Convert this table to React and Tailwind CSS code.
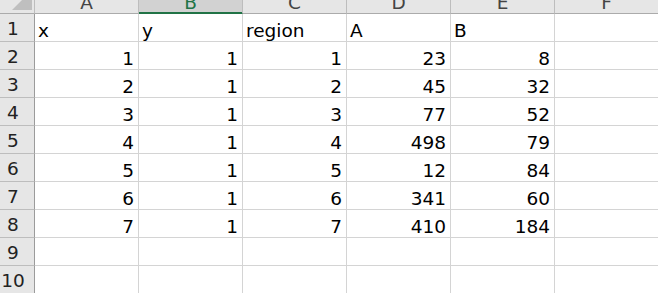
const cols = ['A', 'B', 'C', 'D', 'E', 'F'];

const rows = [
  ['x', 'y', 'region', 'A', 'B', ''],
  [1, 1, 1, 23, 8, ''],
  [2, 1, 2, 45, 32, ''],
  [3, 1, 3, 77, 52, ''],
  [4, 1, 4, 498, 79, ''],
  [5, 1, 5, 12, 84, ''],
  [6, 1, 6, 341, 60, ''],
  [7, 1, 7, 410, 184, ''],
  [],
  [],
];

function Corner() {
  return (
    <div className="relative h-[28px] bg-[#e6e6e6] border-r border-b border-r-[#bdbdbd] border-b-[#ababab]">
      <svg className="absolute left-[12px] top-[4px]" width="20" height="20" viewBox="0 0 20 20">
        <polygon points="20,0 20,20 0,20" fill="#bfbfbf" />
      </svg>
    </div>
  );
}

function ColHead({ label }) {
  const selected = label === 'B';
  return (
    <div
      className={
        selected
          ? 'h-[28px] flex items-end justify-center leading-[20px] bg-[#d2d2d2] text-[#217346] border-r border-b border-r-[#bdbdbd] border-b-[#217346] shadow-[inset_0_-1px_0_#217346]'
          : 'h-[28px] flex items-end justify-center leading-[20px] bg-[#e6e6e6] text-[#444] border-r border-b border-r-[#bdbdbd] border-b-[#ababab]'
      }
    >
      {label}
    </div>
  );
}

export default function App() {
  return (
    <div className="w-[658px] h-[293px] overflow-hidden bg-white text-[18.5px] text-black" style={{ fontFamily: '"DejaVu Sans", sans-serif' }}>
      <div className="-mt-[14px] grid grid-cols-[35px_repeat(6,104px)] w-[659px]">
        <Corner />
        {cols.map((c) => (
          <ColHead key={c} label={c} />
        ))}
        {rows.map((r, i) => (
          <Row key={i} n={i + 1} cells={r} />
        ))}
      </div>
    </div>
  );
}

function Row({ n, cells }) {
  return (
    <>
      <div className="h-[28px] flex items-end justify-center pr-[8px] pb-[2px] leading-[20px] bg-[#e6e6e6] text-[#222] border-r border-b border-r-[#9b9b9b] border-b-[#bdbdbd]">
        {n}
      </div>
      {cols.map((c, j) => {
        const v = cells[j];
        const num = typeof v === 'number';
        return (
          <div
            key={c}
            className={
              num
                ? 'h-[28px] flex items-end justify-end pr-[4px] leading-[20px] border-r border-b border-[#d4d4d4]'
                : 'h-[28px] flex items-end justify-start pl-[3px] leading-[20px] border-r border-b border-[#d4d4d4]'
            }
          >
            {v ?? ''}
          </div>
        );
      })}
    </>
  );
}
